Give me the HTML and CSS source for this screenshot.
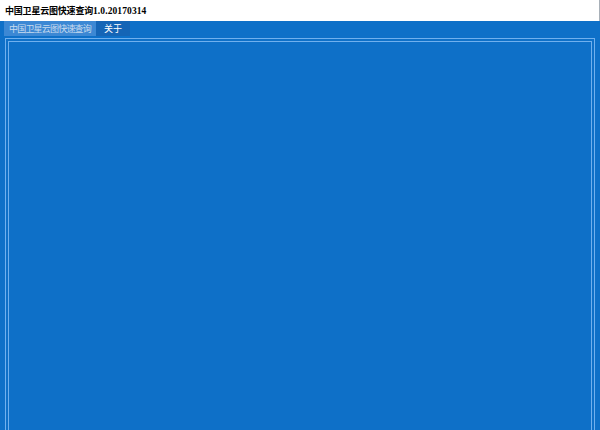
FILE: index.html
```html
<!DOCTYPE html>
<html lang="zh">
<head>
<meta charset="utf-8">
<title>中国卫星云图快速查询</title>
<link rel="stylesheet" href="styles.css">
</head>
<body>
<div class="window">
  <div class="titlebar"><span class="cjk">中国卫星云图快速查询</span><span class="ver">1.0.20170314</span></div>
  <div class="tabs">
    <div class="tab active">中国卫星云图快速查询</div>
    <div class="tab">关于</div>
  </div>
  <div class="panel">
    <div class="panel-inner"></div>
  </div>
</div>
</body>
</html>
```
FILE: styles.css
```css
html, body {
  margin: 0;
  padding: 0;
  background: #0e70c8;
}
.window {
  width: 600px;
  height: 430px;
  display: flex;
  flex-direction: column;
  background: #0e70c8;
  overflow: hidden;
}
.titlebar {
  height: 21px;
  flex: none;
  background: #ffffff;
  border-right: 1px solid #a8b0b8;
  box-sizing: border-box;
  padding-left: 5px;
  display: flex;
  align-items: center;
  font-weight: bold;
  color: #000;
}
.cjk {
  font-family: "Noto Sans CJK SC", sans-serif;
  font-size: 9px;
  letter-spacing: -0.2px;
}
.ver {
  font-family: "Liberation Serif", serif;
  font-size: 9.5px;
  letter-spacing: 0.1px;
}
.tabs {
  height: 15px;
  flex: none;
  display: flex;
  padding-left: 4px;
}
.tab {
  font-family: "Noto Sans CJK SC", sans-serif;
  font-size: 9px;
  line-height: 15px;
  color: #ffffff;
  background: #1565b6;
  width: 34px;
  text-align: center;
}
.tab.active {
  width: 92px;
  background: #3c88d4;
  color: #c9dcef;
  letter-spacing: -0.8px;
}
.panel {
  flex: 1;
  margin: 2px 5px 0 5px;
  border: 1px solid #70b0ee;
  border-bottom: none;
  padding: 2px 2px 0 2px;
  display: flex;
}
.panel-inner {
  flex: 1;
  border: 1px solid #70b0ee;
  border-bottom: none;
}
```
